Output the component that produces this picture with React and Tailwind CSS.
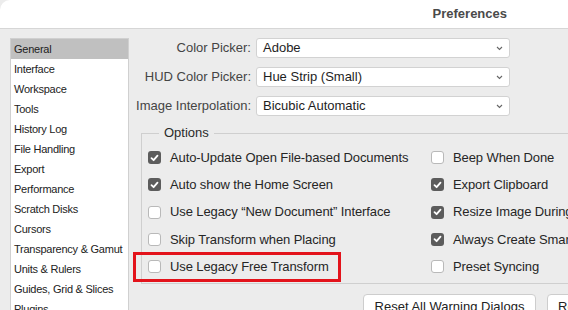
import React from "react";

const sidebar = [
  "General",
  "Interface",
  "Workspace",
  "Tools",
  "History Log",
  "File Handling",
  "Export",
  "Performance",
  "Scratch Disks",
  "Cursors",
  "Transparency & Gamut",
  "Units & Rulers",
  "Guides, Grid & Slices",
  "Plugins",
];

const selects = [
  ["Color Picker:", "Adobe"],
  ["HUD Color Picker:", "Hue Strip (Small)"],
  ["Image Interpolation:", "Bicubic Automatic"],
];

const left = [
  ["Auto-Update Open File-based Documents", true],
  ["Auto show the Home Screen", true],
  ["Use Legacy \u201CNew Document\u201D Interface", false],
  ["Skip Transform when Placing", false],
  ["Use Legacy Free Transform", false],
];
const right = [
  ["Beep When Done", false],
  ["Export Clipboard", true],
  ["Resize Image During Paste/Place", true],
  ["Always Create Smart Objects", true],
  ["Preset Syncing", false],
];

function Box({ checked }) {
  if (checked)
    return (
      <span className="w-[13px] h-[13px] rounded-[3px] bg-[#5c5c5c] flex items-center justify-center shrink-0">
        <svg width="9" height="8" viewBox="0 0 9 8">
          <path d="M1.5 4.2 L3.6 6.2 L7.5 1.6" fill="none" stroke="white" strokeWidth="1.8" strokeLinecap="round" strokeLinejoin="round" />
        </svg>
      </span>
    );
  return <span className="w-[13px] h-[13px] rounded-[3px] bg-white border border-[#b9b9b9] shrink-0" />;
}

function Row({ label, checked }) {
  return (
    <div className="h-[27.25px] flex items-center gap-[9px] whitespace-nowrap">
      <Box checked={checked} />
      <span className="text-[13px] tracking-[-0.1px] text-[#262626]">{label}</span>
    </div>
  );
}

export default function App() {
  return (
    <div className="w-[568px] h-[310px] overflow-hidden bg-[#ececec] font-['Liberation_Sans',Arial,sans-serif] relative">
      <div className="h-[29px] bg-white border-b border-[#d6d6d6] rounded-tl-[10px] flex items-center justify-end pr-[61px]">
        <span className="text-[13px] font-bold text-[#4a4a4a]">Preferences</span>
      </div>
      <div className="flex">
        <div className="ml-[10px] mt-[9px] w-[119px] h-[300px] bg-white border border-[#d0d0d0] shrink-0">
          {sidebar.map((s, i) => (
            <div
              key={s}
              className={
                "h-[20px] flex items-center pl-[3px] text-[11px] tracking-[-0.25px] text-[#222] whitespace-nowrap " +
                (i === 0 ? "bg-[#c0c0c0]" : "")
              }
            >
              {s}
            </div>
          ))}
        </div>
        <div className="flex-1 pt-[9px]">
          <div className="flex flex-col gap-[9px]">
            {selects.map(([l, v]) => (
              <div key={l} className="flex items-center gap-[5px]">
                <span className="w-[122px] text-right text-[13px] text-[#444] whitespace-nowrap">{l}</span>
                <div className="w-[254px] h-[20px] bg-white border border-[#d2d2d2] rounded-[3px] flex items-center justify-between pl-[6px] pr-[6px]">
                  <span className="text-[13px] text-[#1e1e1e]">{v}</span>
                  <svg width="7" height="5" viewBox="0 0 7 5">
                    <path d="M1 1 L3.5 3.5 L6 1" fill="none" stroke="#666" strokeWidth="1.1" />
                  </svg>
                </div>
              </div>
            ))}
          </div>
          <fieldset className="ml-[12px] mt-[10px] w-[500px] border border-[#cfcfcf] pl-[6px] pt-[4px] pb-[3px]">
            <legend className="ml-[11px] px-[5px] text-[13px] leading-[14px] text-[#2a2a2a]">Options</legend>
            <div className="flex">
              <div className="w-[283px] shrink-0">
                {left.map(([l, c]) => (
                  <Row key={l} label={l} checked={c} />
                ))}
              </div>
              <div>
                {right.map(([l, c]) => (
                  <Row key={l} label={l} checked={c} />
                ))}
              </div>
            </div>
          </fieldset>
          <div className="flex gap-[11px] ml-[234px] mt-[10px]">
            <div className="h-[24px] w-[173px] bg-white border border-[#cdcdcd] rounded-[4px] flex items-center justify-center text-[13px] text-[#222] whitespace-nowrap shrink-0">
              Reset All Warning Dialogs
            </div>
            <div className="h-[24px] px-[10px] bg-white border border-[#cdcdcd] rounded-[4px] flex items-center text-[13px] text-[#222] whitespace-nowrap shrink-0">
              Reset Preferences On Quit
            </div>
          </div>
        </div>
      </div>
      <div className="absolute left-[133px] top-[252px] w-[208px] h-[30px] border-[3px] border-[#e3131b]" />
    </div>
  );
}
